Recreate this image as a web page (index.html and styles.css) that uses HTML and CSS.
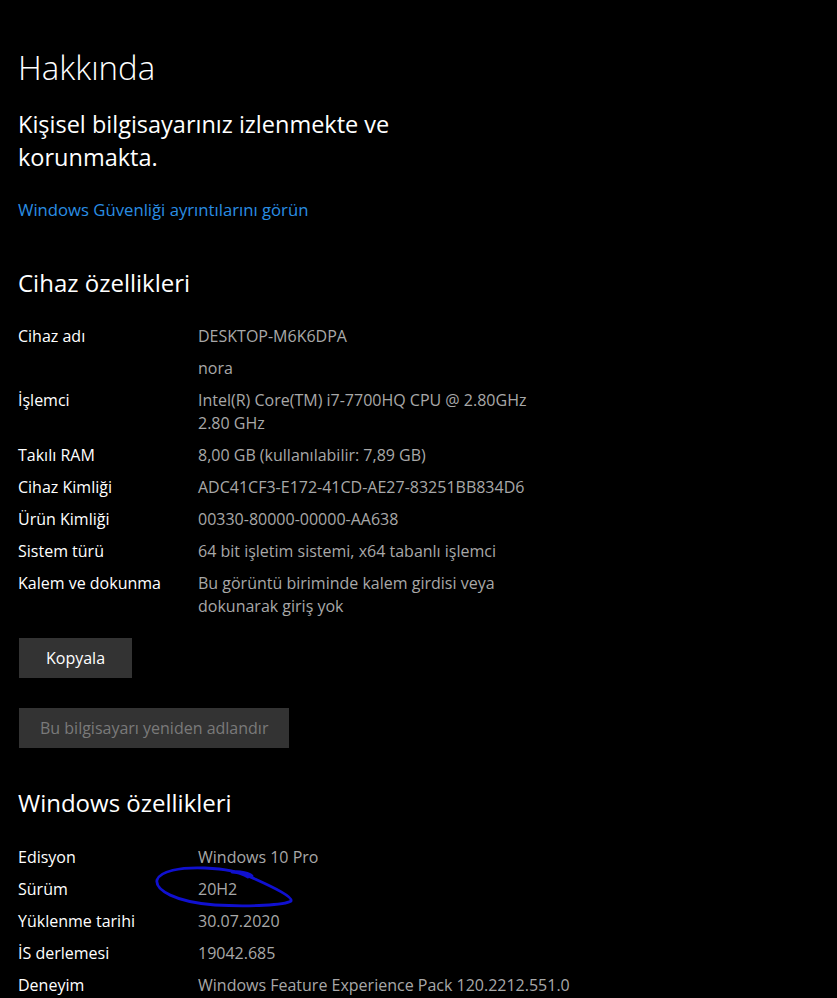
FILE: index.html
```html
<!DOCTYPE html>
<html lang="tr">
<head>
    <meta charset="UTF-8">
    <title>Hakkında</title>
    <meta name="viewport" content="width=device-width, initial-scale=1.0" />
    <link rel="stylesheet" href="styles.css">
</head>
<body>
    <div class="page">
        <h1 class="title">Hakkında</h1>
        <p class="status">Kişisel bilgisayarınız izlenmekte ve<br>korunmakta.</p>
        <a class="link" href="#">Windows Güvenliği ayrıntılarını görün</a>

        <h2 class="section">Cihaz özellikleri</h2>
        <div class="specs">
            <div class="label">Cihaz adı</div>
            <div class="value">DESKTOP-M6K6DPA</div>
            <div class="label"></div>
            <div class="value">nora</div>
            <div class="label">İşlemci</div>
            <div class="value">Intel(R) Core(TM) i7-7700HQ CPU @ 2.80GHz<br>2.80 GHz</div>
            <div class="label">Takılı RAM</div>
            <div class="value">8,00 GB (kullanılabilir: 7,89 GB)</div>
            <div class="label">Cihaz Kimliği</div>
            <div class="value">ADC41CF3-E172-41CD-AE27-83251BB834D6</div>
            <div class="label">Ürün Kimliği</div>
            <div class="value">00330-80000-00000-AA638</div>
            <div class="label">Sistem türü</div>
            <div class="value">64 bit işletim sistemi, x64 tabanlı işlemci</div>
            <div class="label">Kalem ve dokunma</div>
            <div class="value">Bu görüntü biriminde kalem girdisi veya<br>dokunarak giriş yok</div>
        </div>

        <div class="actions">
            <button class="btn">Kopyala</button>
            <button class="btn disabled" disabled>Bu bilgisayarı yeniden adlandır</button>
        </div>

        <h2 class="section section-windows">Windows özellikleri</h2>
        <div class="specs specs-windows">
            <div class="label">Edisyon</div>
            <div class="value">Windows 10 Pro</div>
            <div class="label">Sürüm</div>
            <div class="value">20H2</div>
            <div class="label">Yüklenme tarihi</div>
            <div class="value">30.07.2020</div>
            <div class="label">İS derlemesi</div>
            <div class="value">19042.685</div>
            <div class="label">Deneyim</div>
            <div class="value">Windows Feature Experience Pack 120.2212.551.0</div>
        </div>
    </div>

    <!-- pen mark drawn around the version -->
    <svg class="scribble" width="837" height="998" viewBox="0 0 837 998">
        <path d="M248 877 C240 872 228 869 205 868 C180 867 160 871 157 880 C155 890 175 902 215 905 C250 907 285 905 291 901 C293 897 275 888 255 879 C245 874 238 872 232 872 C240 871 250 873 252 876"
              fill="none" stroke="#1010d0" stroke-width="2.8" stroke-linecap="round" stroke-linejoin="round"/>
    </svg>
</body>
</html>
```

FILE: styles.css
```css
body {
    margin: 0;
    background: #000;
    color: #fff;
    font-family: "Segoe UI", "Open Sans", sans-serif;
    overflow: hidden;
}

.page {
    padding: 0 0 0 18px;
    position: relative;
}

.title {
    margin: 0;
    padding-top: 44px;
    font-size: 33px;
    font-weight: 300;
    line-height: 48px;
}

.status {
    margin: 16px 0 0;
    font-size: 23.5px;
    line-height: 33px;
}

.link {
    display: inline-block;
    margin-top: 24px;
    font-size: 16.7px;
    line-height: 24px;
    color: #2a8ee3;
    text-decoration: none;
}

.section {
    margin: 44px 0 0;
    font-size: 24px;
    font-weight: 400;
    line-height: 34px;
}

.section-windows {
    margin-top: 38px;
}

.specs {
    display: grid;
    grid-template-columns: 180px auto;
    row-gap: 9px;
    margin-top: 25px;
    font-size: 16px;
    line-height: 23px;
}

.specs-windows {
    margin-top: 26px;
}

.label {
    color: #fff;
}

.value {
    color: #a8a8a8;
}

.actions {
    display: flex;
    flex-direction: column;
    align-items: flex-start;
    gap: 30px;
    margin-top: 20px;
    padding-left: 1px;
}

.btn {
    height: 40px;
    padding: 0 27px;
    border: none;
    background: #333;
    color: #fff;
    font-family: inherit;
    font-size: 16px;
}

.btn.disabled {
    padding: 0 21px;
    color: #7a7a7a;
}

.scribble {
    position: absolute;
    top: 0;
    left: 0;
    pointer-events: none;
}
```
